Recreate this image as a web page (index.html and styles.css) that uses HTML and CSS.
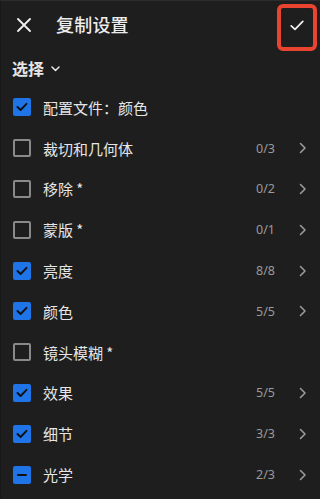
FILE: index.html
```html
<!DOCTYPE html>
<html lang="zh">
<head>
<meta charset="utf-8">
<link rel="stylesheet" href="styles.css">
</head>
<body>
<div class="app">
  <header class="header">
    <button class="close" aria-label="关闭">
      <svg width="14" height="14" viewBox="0 0 14 14"><path d="M1 1L13 13M13 1L1 13" stroke="#f0f0f0" stroke-width="1.8" stroke-linecap="round"/></svg>
    </button>
    <h1 class="title">复制设置</h1>
    <button class="confirm" aria-label="确定">
      <svg width="14" height="11" viewBox="0 0 14 11"><path d="M1.2 5.8L5 9.4L12.8 1.4" fill="none" stroke="#f0f0f0" stroke-width="1.7" stroke-linecap="round" stroke-linejoin="round"/></svg>
    </button>
  </header>
  <div class="select">
    <span>选择</span>
    <svg width="9" height="6" viewBox="0 0 9 6"><path d="M1 1L4.5 4.5L8 1" fill="none" stroke="#e6e6e6" stroke-width="1.5" stroke-linecap="round" stroke-linejoin="round"/></svg>
  </div>
  <ul class="list">
    <li class="row"><span class="cb on"><svg width="12" height="10" viewBox="0 0 12 10"><path d="M1.5 5L4.6 8L10.5 1.8" fill="none" stroke="#111" stroke-width="1.9" stroke-linecap="round" stroke-linejoin="round"/></svg></span><span class="label">配置文件：颜色</span></li>
    <li class="row"><span class="cb"></span><span class="label">裁切和几何体</span><span class="count">0/3</span><span class="chev"><svg width="8" height="12" viewBox="0 0 8 12"><path d="M1.5 1.5L6 6L1.5 10.5" fill="none" stroke="#9a9a9a" stroke-width="1.6" stroke-linecap="round" stroke-linejoin="round"/></svg></span></li>
    <li class="row"><span class="cb"></span><span class="label">移除 *</span><span class="count">0/2</span><span class="chev"><svg width="8" height="12" viewBox="0 0 8 12"><path d="M1.5 1.5L6 6L1.5 10.5" fill="none" stroke="#9a9a9a" stroke-width="1.6" stroke-linecap="round" stroke-linejoin="round"/></svg></span></li>
    <li class="row"><span class="cb"></span><span class="label">蒙版 *</span><span class="count">0/1</span><span class="chev"><svg width="8" height="12" viewBox="0 0 8 12"><path d="M1.5 1.5L6 6L1.5 10.5" fill="none" stroke="#9a9a9a" stroke-width="1.6" stroke-linecap="round" stroke-linejoin="round"/></svg></span></li>
    <li class="row"><span class="cb on"><svg width="12" height="10" viewBox="0 0 12 10"><path d="M1.5 5L4.6 8L10.5 1.8" fill="none" stroke="#111" stroke-width="1.9" stroke-linecap="round" stroke-linejoin="round"/></svg></span><span class="label">亮度</span><span class="count">8/8</span><span class="chev"><svg width="8" height="12" viewBox="0 0 8 12"><path d="M1.5 1.5L6 6L1.5 10.5" fill="none" stroke="#9a9a9a" stroke-width="1.6" stroke-linecap="round" stroke-linejoin="round"/></svg></span></li>
    <li class="row"><span class="cb on"><svg width="12" height="10" viewBox="0 0 12 10"><path d="M1.5 5L4.6 8L10.5 1.8" fill="none" stroke="#111" stroke-width="1.9" stroke-linecap="round" stroke-linejoin="round"/></svg></span><span class="label">颜色</span><span class="count">5/5</span><span class="chev"><svg width="8" height="12" viewBox="0 0 8 12"><path d="M1.5 1.5L6 6L1.5 10.5" fill="none" stroke="#9a9a9a" stroke-width="1.6" stroke-linecap="round" stroke-linejoin="round"/></svg></span></li>
    <li class="row"><span class="cb"></span><span class="label">镜头模糊 *</span></li>
    <li class="row"><span class="cb on"><svg width="12" height="10" viewBox="0 0 12 10"><path d="M1.5 5L4.6 8L10.5 1.8" fill="none" stroke="#111" stroke-width="1.9" stroke-linecap="round" stroke-linejoin="round"/></svg></span><span class="label">效果</span><span class="count">5/5</span><span class="chev"><svg width="8" height="12" viewBox="0 0 8 12"><path d="M1.5 1.5L6 6L1.5 10.5" fill="none" stroke="#9a9a9a" stroke-width="1.6" stroke-linecap="round" stroke-linejoin="round"/></svg></span></li>
    <li class="row"><span class="cb on"><svg width="12" height="10" viewBox="0 0 12 10"><path d="M1.5 5L4.6 8L10.5 1.8" fill="none" stroke="#111" stroke-width="1.9" stroke-linecap="round" stroke-linejoin="round"/></svg></span><span class="label">细节</span><span class="count">3/3</span><span class="chev"><svg width="8" height="12" viewBox="0 0 8 12"><path d="M1.5 1.5L6 6L1.5 10.5" fill="none" stroke="#9a9a9a" stroke-width="1.6" stroke-linecap="round" stroke-linejoin="round"/></svg></span></li>
    <li class="row"><span class="cb on"><span class="dash"></span></span><span class="label">光学</span><span class="count">2/3</span><span class="chev"><svg width="8" height="12" viewBox="0 0 8 12"><path d="M1.5 1.5L6 6L1.5 10.5" fill="none" stroke="#9a9a9a" stroke-width="1.6" stroke-linecap="round" stroke-linejoin="round"/></svg></span></li>
  </ul>
</div>
</body>
</html>
```
FILE: styles.css
```css
* { box-sizing: border-box; }
html, body {
  margin: 0;
  padding: 0;
  background: #1e1e1e;
}
body {
  font-family: "Noto Sans CJK SC", "Noto Sans", sans-serif;
  color: #e8e8e8;
  overflow: hidden;
}
.app {
  width: 320px;
  height: 499px;
  border-top: 1px solid #2c2c2c;
  border-left: 1px solid #181818;
}
.header {
  height: 49px;
  display: flex;
  align-items: center;
}
button {
  background: none;
  border: none;
  padding: 0;
  margin: 0;
  display: flex;
  align-items: center;
  justify-content: center;
  cursor: pointer;
}
.close {
  width: 14px;
  height: 14px;
  margin-left: 16px;
  margin-bottom: 1px;
}
.title {
  margin: 0 0 0 25px;
  padding-bottom: 4px;
  font-size: 18px;
  font-weight: 500;
  color: #ececec;
  letter-spacing: 0.2px;
  line-height: 1;
}
.confirm {
  margin-left: auto;
  margin-right: 3px;
  margin-top: 3px;
  width: 40px;
  height: 47px;
  padding-bottom: 4px;
  border: 4px solid #e84430;
  border-radius: 6px;
  align-self: flex-start;
}
.select {
  height: 37px;
  display: flex;
  align-items: center;
  padding-left: 11px;
  padding-bottom: 2px;
  gap: 7px;
  font-size: 16px;
  font-weight: 700;
  color: #e6e6e6;
}
.select svg { margin-top: 2px; }
.list {
  list-style: none;
  margin: 0;
  padding: 0;
}
.row {
  height: 40.8px;
  display: flex;
  align-items: center;
  padding-left: 12px;
}
.cb {
  width: 18px;
  height: 18px;
  border: 2px solid #8a8a8a;
  border-radius: 2px;
  display: flex;
  align-items: center;
  justify-content: center;
  flex: none;
}
.cb.on {
  background: #1f74e8;
  border-color: #1f74e8;
}
.dash {
  width: 10px;
  height: 2px;
  background: #111;
  border-radius: 1px;
}
.label {
  margin-left: 12px;
  font-size: 15px;
  color: #e6e6e6;
  flex: 1;
}
.count {
  font-family: "Noto Sans", sans-serif;
  font-size: 12.5px;
  color: #9a9a9a;
  width: 30px;
  text-align: right;
}
.chev {
  width: 8px;
  height: 12px;
  margin-left: 24px;
  margin-right: 13px;
  display: flex;
}
```
